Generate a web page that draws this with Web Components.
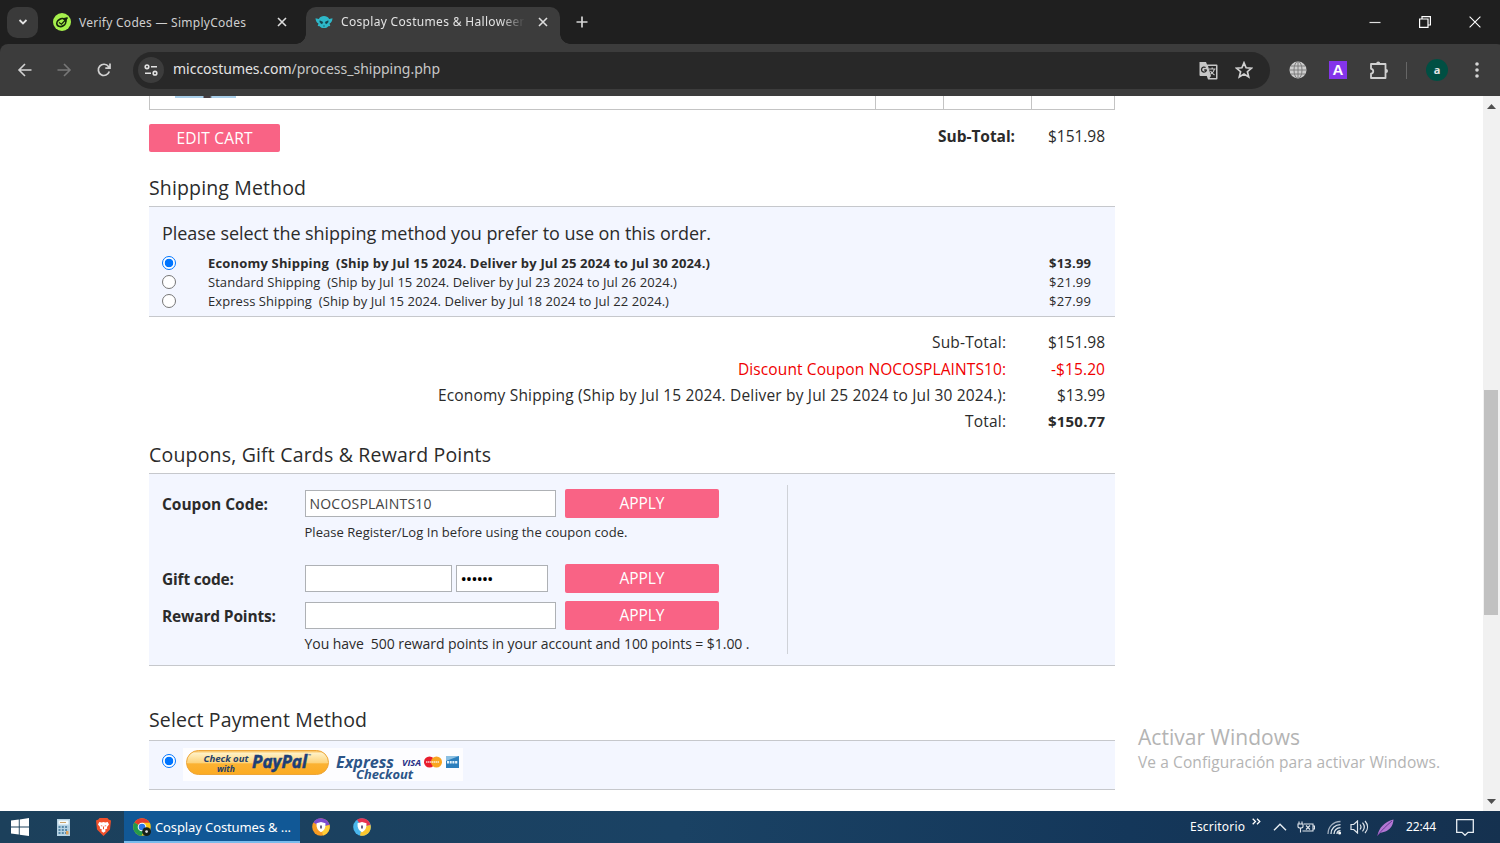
<!DOCTYPE html>
<html lang="en">
<head>
<meta charset="utf-8">
<title>Cosplay Costumes &amp; Halloween</title>
<style>
    html, body { margin: 0; height: 100%; overflow: hidden; }
    body {
        display: grid;
        grid-template-rows: 96px 715px 32px;
        width: 1500px;
        background: #fff;
        color: #2b2b2b;
        font-family: "Open Sans", "Noto Sans", sans-serif;
    }
</style>
</head>
<body>
<browser-chrome></browser-chrome>
<checkout-page></checkout-page>
<task-bar></task-bar>

<script>
const ICONS = {
    chevron: [12, 12, '<path d="M2.5 4l3.5 3.5L9.500 4" fill="none" stroke="#e3e3e3" stroke-width="1.8"/>'],
    simply: [18, 18, '<circle cx="9" cy="9" r="9" fill="#a6f04c"/><ellipse cx="8.300" cy="9.600" rx="4.700" ry="3.700" transform="rotate(-30 8.300 9.600)" fill="none" stroke="#16240a" stroke-width="1.700"/><path d="M6 9.500l2.500 1.700 6-6.500M10 6l3.800-1-1 3.600" fill="none" stroke="#16240a" stroke-width="1.300"/>'],
    mic: [18, 14, '<path d="M.5 3.200l3.300.8C5 1.800 6.800 1 9 1s4 .8 5.200 3l3.300-.8c-.2 2.600-1 4.400-3 5.200l.8 2.600-2 .2C12.400 12.500 11 13 9 13s-3.400-.5-4.300-1.800l-2-.2.800-2.600C1.500 7.600.7 5.800.500 3.200z" fill="#2eb8c9"/><path d="M4.800 5.800l3 1.300-.6 1.500c-1.400.2-2.300-.8-2.400-2.800zm8.400 0l-3 1.300.6 1.500c1.400.2 2.300-.8 2.400-2.800zM8 11h2" fill="#16404a" stroke="#16404a" stroke-width=".6"/>'],
    x: [10, 10, '<path d="M1 1l8 8M9 1L1 9" stroke="#dedede" stroke-width="1.600"/>'],
    plus: [12, 12, '<path d="M6 .5v11M.5 6h11" stroke="#d5d5d5" stroke-width="1.700"/>'],
    minimize: [12, 12, '<path d="M.5 6.500h11" stroke="#e0e0e0" stroke-width="1.200"/>'],
    restore: [12, 12, '<path d="M.6 3h8.400v8.400H.6zM3 3V.6h8.400V9H9" fill="none" stroke="#fff" stroke-width="1.200"/>'],
    close: [12, 12, '<path d="M.6.6l10.800 10.800M11.400.6L.6 11.400" stroke="#fff" stroke-width="1.100"/>'],
    back: [16, 16, '<path d="M14.500 8H2.500M8 2L2 8l6 6" fill="none" stroke="#d2d2d2" stroke-width="1.600"/>'],
    forward: [16, 16, '<path d="M1.500 8h12.500M8 2l6 6-6 6" fill="none" stroke="#777" stroke-width="1.600"/>'],
    reload: [16, 16, '<path d="M13.300 9.500A5.600 5.600 0 1 1 12.500 4.600L14 6M14 1.500V6.200H9.300" fill="none" stroke="#d2d2d2" stroke-width="1.700"/>'],
    tune: [14, 12, '<g fill="none" stroke="#e3e3e3" stroke-width="1.600"><circle cx="3" cy="2.800" r="1.800"/><path d="M7 2.800h6M1 9.200h6"/><circle cx="11" cy="9.200" r="1.800"/></g>'],
    translate: [19, 19, '<path d="M.5 1h6.500l1 2.500h9.500a1 1 0 0 1 1 1v13a1 1 0 0 1-1 1H9L7.800 15H1.500a1 1 0 0 1-1-1z" fill="#c6c6c6"/><path d="M9 5h8v12h-6.500l1.500-2z" fill="#282828"/><path d="M7.700 9H5.200M7.500 9a2.500 2.500 0 1 1-.9-2.400" fill="none" stroke="#282828" stroke-width="1.300"/><path d="M10 8h6.500M13.200 6.500V8M15.500 8c-.5 2.400-2 4-4 5.200M11.500 10c.8 1.600 2.400 3 4 4" fill="none" stroke="#c6c6c6" stroke-width="1.200"/>'],
    star: [18, 18, '<path d="M9 1.800l2.100 5 5.400.4-4.100 3.500 1.300 5.200L9 13.100l-4.700 2.800 1.300-5.200L1.500 7.200l5.400-.4z" fill="none" stroke="#d0d0d0" stroke-width="1.700"/>'],
    globe: [18, 18, '<circle cx="9" cy="9" r="8.500" fill="#ccc"/><g fill="none" stroke="#777" stroke-width=".9"><ellipse cx="9" cy="9" rx="4" ry="8.500"/><path d="M9 .5v17M.5 9h17M1.700 5h14.600M1.700 13h14.600"/></g>'],
    puzzle: [20, 20, '<path d="M2 4h14.500v14H2v-4.300c3-.4 3-4.500 0-4.900z" fill="none" stroke="#d0d0d0" stroke-width="1.800" stroke-linejoin="round"/><path d="M7.200 3.500a2 2 0 0 1 4 0zM17 9a2 2 0 0 1 0 4z" fill="#d0d0d0"/>'],
    dots: [4, 16, '<g fill="#d5d5d5"><circle cx="2" cy="2" r="1.800"/><circle cx="2" cy="8" r="1.800"/><circle cx="2" cy="14" r="1.800"/></g>'],
    windows: [18, 18, '<path d="M0 2.600l7.800-1.100v7H0zM8.700 1.400L18 0v8.500H8.700zM0 9.500h7.800v7L0 15.400zM8.700 9.500H18V18l-9.300-1.300z" fill="#fff"/>'],
    calc: [13, 17, '<rect width="13" height="17" fill="#b7d3e4"/><path d="M1.500 1.500h10v4h-10z" fill="#f3fafd"/><path d="M3 3.500h6" stroke="#c9a26a"/><path d="M1.500 8h10M1.500 11h10M1.500 14h10" stroke="#5989a8" stroke-width="1.800" stroke-dasharray="2 1.300"/><path d="M9 12h2.500v3.500H9z" fill="#e0a45e"/>'],
    brave: [15, 18, '<path d="M3.500 0h8l1.200 1.600L15 2.500 14 11.500 7.500 18 1 11.500 0 2.500l2.300-.9z" fill="#f1502b"/><path d="M3.300 4l2.400.5L7.500 4l1.800.5 2.400-.5 1.300 2.600-2 2.300.2 1.600-2.400 1.300 1 1.200-2.300 1.700-2.300-1.700 1-1.200-2.400-1.300L4 8.900 2 6.600z" fill="#fff"/><path d="M4.500 7l2 .8-.5.900zM10.500 7l-2 .8.500.9zM7 8.500h1v2.700H7z" fill="#f1502b"/>'],
    chrome: [18, 18, '<circle cx="9" cy="9" r="8.800" fill="#fbc518"/><path d="M9 9L1.400 4.600A8.800 8.800 0 0 1 16.700 4.800H9z" fill="#e33b2e"/><path d="M9 9L1.400 4.600A8.800 8.800 0 0 0 8.500 17.800L12 11z" fill="#249a4b"/><circle cx="9" cy="9" r="4.300" fill="#fff"/><circle cx="9" cy="9" r="3.300" fill="#2a75e6"/><circle cx="13.600" cy="13.600" r="4.400" fill="#16201a"/><circle cx="13.600" cy="13.600" r="1.400" fill="#ddd"/>'],
    shieldA: [18, 18, '<circle cx="9" cy="9" r="8.800" fill="#f79a22"/><path d="M9 9L1.500 4.500A8.800 8.800 0 0 1 17.500 7z" fill="#7d4bd0"/><path d="M9 9l8.500-2A8.800 8.800 0 0 1 11 17.500z" fill="#ffce3a"/><path d="M9 4l4.500 1.200c.2 4.600-1.200 7.500-4.500 9-3.300-1.500-4.700-4.400-4.500-9z" fill="#fff"/><path d="M8.200 7.500h1.600v3H8.200z" fill="#473a68"/>'],
    shieldB: [18, 18, '<circle cx="9" cy="9" r="8.800" fill="#49b6ec"/><path d="M9 9L4 1.700A8.800 8.800 0 0 1 17.500 7z" fill="#e8324e"/><path d="M9 9l8.500-2A8.800 8.800 0 0 1 7 17.600z" fill="#fbc62f"/><path d="M9 4l4.500 1.200c.2 4.600-1.200 7.500-4.500 9-3.300-1.500-4.700-4.400-4.500-9z" fill="#fff"/><path d="M8.200 7.500h1.600v3H8.200z" fill="#473a68"/>'],
    more: [9, 7, '<path d="M.7.7l2.800 2.800L.7 6.300M5 .7l2.800 2.800L5 6.300" fill="none" stroke="#fff" stroke-width="1.300"/>'],
    up: [14, 8, '<path d="M1 7.300l6-6 6 6" fill="none" stroke="#e8eef3" stroke-width="1.400"/>'],
    battery: [18, 12, '<g fill="none" stroke="#e2e8ee" stroke-width="1.100"><path d="M7 3h9v7H5.500M16.500 5h1v3h-1M2 .5V3M5 .5V3M1 3h5v2.500c0 1-1 1.500-2.500 1.500S1 6.500 1 5.500zM3.500 7v4.500"/><path d="M9 4.500l4 4M13 4.500l-4 4"/></g>'],
    wifi: [15, 15, '<g fill="none" stroke="#dfe6ec" stroke-width="1.300"><path d="M1 14C1 7 6 1.500 13.500 1.500" opacity=".7"/><path d="M4 14c0-5.500 4-9.300 9.500-9.300M7 14c0-3.800 2.800-6.300 6.500-6.300M10 14c0-2 1.500-3.300 3.500-3.300"/></g><circle cx="12.600" cy="13" r="1.500" fill="#fff"/>'],
    volume: [19, 14, '<g fill="none" stroke="#e2e8ee" stroke-width="1.200"><path d="M1 4.500h2.700L7.500 1v12L3.700 9.500H1zM10 4.500c1.200 1.500 1.200 3.500 0 5M12.500 2.700c2.200 2.600 2.200 6 0 8.600M15 1c3.300 3.600 3.300 8.400 0 12"/></g>'],
    feather: [17, 17, '<path d="M.5 16.500C2 9 7 3 16.500.5c-.2 5-2.500 9-6.500 11.200-2 1-4.500 1.300-7 2.300z" fill="#b277d4"/><path d="M.5 16.500C5 11 9 7 15 2" fill="none" stroke="#6a3a96" stroke-width="1"/>'],
    notify: [18, 17, '<path d="M.7.700h16.600v12.600h-5.300L9 16.300l-3-3H.7z" fill="none" stroke="#e8eef3" stroke-width="1.300"/>'],
    arrowUp: [9, 5, '<path d="M0 5l4.500-5L9 5z" fill="#505050"/>'],
    arrowDown: [9, 5, '<path d="M0 0l4.500 5L9 0z" fill="#505050"/>']
};

class UiIcon extends HTMLElement {
    constructor() {
        super();
        this.attachShadow({ mode: 'open' });
    }

    connectedCallback() {
        const [w, h, body] = ICONS[this.getAttribute('name')];
        this.shadowRoot.innerHTML = `
            <style>
                :host { display: inline-flex; flex: none; align-items: center; justify-content: center; }
                svg { display: block; flex: none; }
            </style>
            <svg width="${w}" height="${h}" viewBox="0 0 ${w} ${h}">${body}</svg>
        `;
        if (this.hasAttribute('cell')) {
            this.style.width = this.getAttribute('cell') + 'px';
        }
    }
}

// Single line of text, tracked so that it fills the given width
class FitText extends HTMLElement {
    constructor() {
        super();
        this.attachShadow({ mode: 'open' });
        this.shadowRoot.innerHTML = `
            <style>
                :host { display: block; flex: none; }
                span { display: block; width: max-content; white-space: pre; }
            </style>
            <span><slot></slot></span>
        `;
    }

    connectedCallback() {
        if (this.hasAttribute('size')) {
            this.style.fontSize = this.getAttribute('size') + 'px';
        }
        const width = parseFloat(this.getAttribute('width'));
        const span = this.shadowRoot.querySelector('span');
        const count = this.textContent.length;
        const natural = span.getBoundingClientRect().width;
        const spacing = (width - natural) / (count - 1);
        span.style.letterSpacing = spacing.toFixed(3) + 'px';
        span.style.marginRight = (-spacing).toFixed(3) + 'px';
    }
}

class BrowserChrome extends HTMLElement {
    constructor() {
        super();
        this.attachShadow({ mode: 'open' });
        this.shadowRoot.innerHTML = `
            <style>
                :host { display: grid; grid-template-rows: 44px 52px; background: #1f1f1f; color: #e3e3e3; font-family: "Noto Sans", sans-serif; }
                .tabs, .tools, .address { display: flex; align-items: center; }
                .tabs { padding-right: 5px; }
                .search { width: 31px; height: 31px; margin-left: 7px; background: #3a3a3a; border-radius: 10px; }
                .tab { display: flex; align-items: center; height: 37px; }
                .first { width: 253px; margin-left: 15px; }
                .first ui-icon[name=simply] { margin-right: 8px; }
                .active { position: relative; width: 254px; margin-top: 7px; background: #3c3c3c; border-radius: 10px 10px 0 0; }
                .active::before, .active::after { content: ""; position: absolute; bottom: 0; width: 10px; height: 10px; }
                .active::before { left: -10px; background: radial-gradient(circle at 0 0, transparent 9.5px, #3c3c3c 10px); }
                .active::after { right: -10px; background: radial-gradient(circle at 100% 0, transparent 9.5px, #3c3c3c 10px); }
                .active > ui-icon, .active > .title { margin-top: -7px; }
                .title { width: 183px; overflow: hidden; line-height: 24px; margin-right: 11px; -webkit-mask-image: linear-gradient(90deg, #000 160px, transparent 184px); }
                .tab.first fit-text { color: #cfcfcf; width: 193px; }
                .spacer { flex: 1; }
                .tools { background: #3c3c3c; border-radius: 8px 8px 0 0; }
                .address { width: 1137px; height: 37px; margin: 0 8px 0 10px; background: #282828; border-radius: 19px; }
                .address fit-text { line-height: 20px; margin-top: -2px; }
                .tune { width: 26px; height: 26px; margin: 0 9px 0 5px; border-radius: 50%; background: #3c3c3c; }
                .path { color: #c7c7c7; }
                .ext { width: 18px; height: 18px; margin: 0 11px; background: #8434ea; color: #fff; font: bold 15px/18px "Liberation Sans", sans-serif; text-align: center; }
                .bar { width: 1px; height: 17px; margin: 0 19px 0 8px; background: #666; }
                .avatar { width: 22px; height: 22px; border-radius: 50%; background: #004f43; font: bold 11px/21px "Noto Sans", sans-serif; text-align: center; }
            </style>
            <div class="tabs">
                <ui-icon class="search" name="chevron"></ui-icon>
                <div class="tab first">
                    <ui-icon name="simply"></ui-icon>
                    <fit-text size="12" width="167">Verify Codes — SimplyCodes</fit-text>
                    <ui-icon name="x" cell="20"></ui-icon>
                </div>
                <div class="tab active">
                    <ui-icon name="mic" cell="35"></ui-icon>
                    <div class="title"><fit-text size="12" width="186">Cosplay Costumes &amp; Halloween</fit-text></div>
                    <ui-icon name="x" cell="16"></ui-icon>
                </div>
                <ui-icon name="plus" cell="44"></ui-icon>
                <span class="spacer"></span>
                <ui-icon name="minimize" cell="51"></ui-icon>
                <ui-icon name="restore" cell="50"></ui-icon>
                <ui-icon name="close" cell="50"></ui-icon>
            </div>
            <div class="tools">
                <ui-icon name="back" cell="50"></ui-icon>
                <ui-icon name="forward" cell="28"></ui-icon>
                <ui-icon name="reload" cell="45" style="margin-left:3px;margin-right:-3px"></ui-icon>
                <div class="address">
                    <ui-icon class="tune" name="tune"></ui-icon>
                    <fit-text size="14" width="267">miccostumes.com<span class="path">/process_shipping.php</span></fit-text>
                    <span class="spacer"></span>
                    <ui-icon name="translate" cell="35"></ui-icon>
                    <ui-icon name="star" cell="36"></ui-icon>
                    <span style="width:8px"></span>
                </div>
                <ui-icon name="globe" cell="40"></ui-icon>
                <div class="ext">A</div>
                <ui-icon name="puzzle" cell="42"></ui-icon>
                <span class="bar" style="margin-left:6px"></span>
                <div class="avatar">a</div>
                <ui-icon name="dots" cell="57"></ui-icon>
            </div>
        `;
    }
}

class ShopButton extends HTMLElement {
    constructor() {
        super();
        this.attachShadow({ mode: 'open' });
        this.shadowRoot.innerHTML = `
            <style>
                :host { display: flex; align-items: center; justify-content: center; box-sizing: border-box; height: 29px; width: 154px; padding-bottom: 1px; background: #f96385; border-radius: 2px; color: #fff; line-height: 22px; }
            </style>
            <slot></slot>
        `;
    }
}

class RadioDot extends HTMLElement {
    constructor() {
        super();
        this.attachShadow({ mode: 'open' });
        this.shadowRoot.innerHTML = `
            <style>
                :host { display: block; flex: none; box-sizing: border-box; width: 14px; height: 14px; border: 1px solid #767676; border-radius: 50%; background: #fff; }
                :host([checked]) { border: 1.500px solid #0075ff; background: radial-gradient(circle, #0075ff 4px, #fff 4.600px); }
            </style>
        `;
    }
}

class TextField extends HTMLElement {
    constructor() {
        super();
        this.attachShadow({ mode: 'open' });
        this.shadowRoot.innerHTML = `
            <style>
                :host { display: flex; align-items: center; box-sizing: border-box; height: 27px; width: 251px; padding: 1px 0 0 4px; border: 1px solid #aeb1b5; background: #fff; color: #444; line-height: 20px; }
            </style>
            <slot></slot>
        `;
    }
}

class SectionPanel extends HTMLElement {
    constructor() {
        super();
        this.attachShadow({ mode: 'open' });
        this.shadowRoot.innerHTML = `
            <style>
                :host { display: block; }
                header { display: flex; align-items: flex-end; box-sizing: border-box; height: var(--head); padding-bottom: var(--lift, 4px); line-height: 28px; }
                .body { box-sizing: border-box; height: var(--body); border: solid #c6c8cc; border-width: 1px 0; background: #f3f6ff; }
            </style>
            <header><slot name="title"></slot></header>
            <div class="body"><slot></slot></div>
        `;
    }
}

class ShippingOption extends HTMLElement {
    constructor() {
        super();
        this.attachShadow({ mode: 'open' });
    }

    connectedCallback() {
        const checked = this.hasAttribute('checked') ? 'checked' : '';
        this.shadowRoot.innerHTML = `
            <style>
                :host { display: flex; align-items: center; height: 18.700px; padding: 0 24px 0 13px; line-height: 18px; }
                :host([checked]) { font-weight: 700; }
                radio-dot { margin-right: 32px; }
                .price { margin-left: auto; }
            </style>
            <radio-dot ${checked}></radio-dot>
            <slot></slot>
            <span class="price"><fit-text size="13" width="42">${this.getAttribute('price')}</fit-text></span>
        `;
    }
}

class TotalRow extends HTMLElement {
    constructor() {
        super();
        this.attachShadow({ mode: 'open' });
        this.shadowRoot.innerHTML = `
            <style>
                :host { display: grid; grid-template-columns: 857px 99px; justify-items: end; align-items: center; height: 26.400px; line-height: 24px; }
            </style>
            <slot></slot><slot name="value"></slot>
        `;
    }
}

class PaypalBadge extends HTMLElement {
    constructor() {
        super();
        this.attachShadow({ mode: 'open' });
        this.shadowRoot.innerHTML = `
            <style>
                :host { display: block; flex: none; width: 280px; height: 33px; background: #fdfdff; }
                svg { display: block; }
                text { font-family: "Open Sans", "Noto Sans", sans-serif; font-style: italic; font-weight: 700; }
            </style>
            <svg width="280" height="33" viewBox="0 0 280 33">
                <defs>
                    <linearGradient id="gold" x2="0" y2="1">
                        <stop offset="0" stop-color="#f7b544"/>
                        <stop offset=".12" stop-color="#fff0c4"/>
                        <stop offset=".5" stop-color="#fdd47c"/>
                        <stop offset=".56" stop-color="#fbb232"/>
                        <stop offset="1" stop-color="#fcab22"/>
                    </linearGradient>
                </defs>
                <rect x="3.500" y="2.500" width="142" height="24" rx="12" fill="url(#gold)" stroke="#eda63a"/>
                <g fill="#24406a">
                    <text x="20.500" y="14" font-size="9.500" textLength="45" lengthAdjust="spacingAndGlyphs">Check out</text>
                    <text x="34" y="23.500" font-size="9.500" textLength="18" lengthAdjust="spacingAndGlyphs">with</text>
                </g>
                <text x="69" y="20" font-size="17.500" textLength="55" lengthAdjust="spacingAndGlyphs" fill="#1c3f78" stroke="#1c3f78" stroke-width=".5">PayPal</text>
                <text x="125" y="9" font-size="4" fill="#1c3f78">™</text>
                <g fill="#2c5588">
                    <text x="153" y="20" font-size="15.500" textLength="58" lengthAdjust="spacingAndGlyphs">Express</text>
                    <text x="173" y="30.500" font-size="12" textLength="57" lengthAdjust="spacingAndGlyphs">Checkout</text>
                </g>
                <text x="219" y="17.500" font-size="9.500" textLength="19" lengthAdjust="spacingAndGlyphs" fill="#272f85">VISA</text>
                <circle cx="246.500" cy="14" r="5.500" fill="#e81d2e"/>
                <circle cx="253.500" cy="14" r="5.500" fill="#f9a51f"/>
                <path d="M243 14h13" stroke="#fff" stroke-width="1.600" stroke-dasharray="1.500 .5" opacity=".8"/>
                <rect x="263" y="8" width="13" height="12" fill="#2c7fbd"/>
                <path d="M263 8h13L263 13z" fill="#8cc0e2"/>
                <path d="M264 14.300h11" stroke="#e3f2fb" stroke-width="2.500" stroke-dasharray="2 .7"/>
            </svg>
        `;
    }
}

class PageScrollbar extends HTMLElement {
    constructor() {
        super();
        this.attachShadow({ mode: 'open' });
        this.shadowRoot.innerHTML = `
            <style>
                :host { display: grid; grid-template-rows: 20px 1fr 20px; justify-items: center; background: #f1f1f1; }
                .thumb { width: 14px; height: 225px; margin: 274px 2px 0 0; background: #c1c1c1; }
            </style>
            <ui-icon name="arrowUp"></ui-icon>
            <div class="thumb"></div>
            <ui-icon name="arrowDown"></ui-icon>
        `;
    }
}

class CheckoutPage extends HTMLElement {
    constructor() {
        super();
        this.attachShadow({ mode: 'open' });
        this.shadowRoot.innerHTML = `
            <style>
                :host { display: grid; grid-template-columns: 1483px 17px; position: relative; overflow: hidden; }
                main { width: 966px; margin-left: 149px; }
                .items { display: grid; grid-template-columns: 725px 67px 87px 1fr; gap: 1px; box-sizing: border-box; height: 14px; padding: 0 1px 1px; background: #c4c4c4; }
                .items div { background: #fff; }
                .items .thumb { width: 61px; height: 2px; margin-left: 25px; background: linear-gradient(90deg, #a9cfea 28px, #453c40 29px 35px, #a9cfea 37px); }
                .cart { display: flex; align-items: flex-start; margin-top: 14px; height: 28px; padding-right: 10px; line-height: 24px; }
                .cart shop-button { width: 131px; height: 28px; margin-right: auto; }
                .cart b { margin-right: 33px; }
                .lead { padding: 14px 0 9px 13px; line-height: 24px; display: flex; }
                .totals { height: 118.600px; padding-top: 12px; box-sizing: border-box; }
                .red { color: #f00000; }
                .form { display: grid; grid-template-columns: 142.500px 260.500px 154px; grid-template-rows: 29px 46px 29px 8px 29px 28px; align-items: center; box-sizing: border-box; width: 639px; height: 169px; margin-top: 11px; padding: 4px 0 0 13px; border-right: 1px solid #cfd2d8; }
                .form b { line-height: 22px; padding-top: 1px; }
                .pair { display: flex; gap: 4px; }
                .hint { grid-column: 2 / 4; align-self: start; line-height: 20px; display: flex; padding-top: 4px; }
                .gap { grid-column: 1 / 4; }
                .pay { display: flex; align-items: center; gap: 7px; padding: 7px 13px; }
                .pay radio-dot { margin-top: -7px; }
                .activate { position: absolute; left: 1138px; top: 627px; color: #b4b4b4; }
                .activate fit-text { line-height: 28px; }
                .activate fit-text + fit-text { line-height: 22px; }
            </style>
            <main>
                <div class="items"><div><div class="thumb"></div></div><div></div><div></div><div></div></div>
                <div class="cart">
                    <shop-button><fit-text size="15.500" width="76">EDIT CART</fit-text></shop-button>
                    <b><fit-text size="15.500" width="77">Sub-Total:</fit-text></b>
                    <fit-text size="15.500" width="57">$151.98</fit-text>
                </div>
                <section-panel style="--head:54px;--body:111px">
                    <fit-text slot="title" size="19.500" width="157">Shipping Method</fit-text>
                    <div class="lead"><fit-text size="18" width="549">Please select the shipping method you prefer to use on this order.</fit-text></div>
                    <shipping-option checked price="$13.99"><fit-text size="13" width="502">Economy Shipping  (Ship by Jul 15 2024. Deliver by Jul 25 2024 to Jul 30 2024.)</fit-text></shipping-option>
                    <shipping-option price="$21.99"><fit-text size="13" width="469">Standard Shipping  (Ship by Jul 15 2024. Deliver by Jul 23 2024 to Jul 26 2024.)</fit-text></shipping-option>
                    <shipping-option price="$27.99"><fit-text size="13" width="461">Express Shipping  (Ship by Jul 15 2024. Deliver by Jul 18 2024 to Jul 22 2024.)</fit-text></shipping-option>
                </section-panel>
                <div class="totals">
                    <total-row><fit-text size="15.500" width="74">Sub-Total:</fit-text><fit-text slot="value" size="15.500" width="57">$151.98</fit-text></total-row>
                    <total-row class="red"><fit-text size="15.500" width="268">Discount Coupon NOCOSPLAINTS10:</fit-text><fit-text slot="value" size="15.500" width="54">-$15.20</fit-text></total-row>
                    <total-row><fit-text size="15.500" width="568">Economy Shipping (Ship by Jul 15 2024. Deliver by Jul 25 2024 to Jul 30 2024.):</fit-text><fit-text slot="value" size="15.500" width="48">$13.99</fit-text></total-row>
                    <total-row><fit-text size="15.500" width="41">Total:</fit-text><b slot="value"><fit-text size="15" width="57">$150.77</fit-text></b></total-row>
                </div>
                <section-panel style="--head:37.400px;--body:193px">
                    <fit-text slot="title" size="19.500" width="342">Coupons, Gift Cards &amp; Reward Points</fit-text>
                    <div style="display:flow-root"><div class="form">
                        <b><fit-text size="15.500" width="106">Coupon Code:</fit-text></b>
                        <text-field><fit-text size="14" width="122">NOCOSPLAINTS10</fit-text></text-field>
                        <shop-button><fit-text size="15.500" width="45">APPLY</fit-text></shop-button>
                        <span></span>
                        <div class="hint"><fit-text size="13" width="323">Please Register/Log In before using the coupon code.</fit-text></div>
                        <b><fit-text size="15.500" width="72">Gift code:</fit-text></b>
                        <div class="pair">
                            <text-field style="width:147px"></text-field>
                            <text-field style="width:92px;color:#000"><fit-text size="17" width="33">••••••</fit-text></text-field>
                        </div>
                        <shop-button><fit-text size="15.500" width="45">APPLY</fit-text></shop-button>
                        <span class="gap"></span>
                        <b><fit-text size="15.500" width="114">Reward Points:</fit-text></b>
                        <text-field></text-field>
                        <shop-button><fit-text size="15.500" width="45">APPLY</fit-text></shop-button>
                        <span></span>
                        <div class="hint"><fit-text size="14" width="445">You have  500 reward points in your account and 100 points = $1.00 .</fit-text></div>
                    </div></div>
                </section-panel>
                <section-panel style="--head:74px;--body:50px;--lift:6px">
                    <fit-text slot="title" size="19.500" width="218">Select Payment Method</fit-text>
                    <div class="pay"><radio-dot checked></radio-dot><paypal-badge></paypal-badge></div>
                </section-panel>
            </main>
            <page-scrollbar></page-scrollbar>
            <div class="activate">
                <fit-text size="21" width="162">Activar Windows</fit-text>
                <fit-text size="15.500" width="302">Ve a Configuración para activar Windows.</fit-text>
            </div>
        `;
    }
}

class TaskBar extends HTMLElement {
    constructor() {
        super();
        this.attachShadow({ mode: 'open' });
        this.shadowRoot.innerHTML = `
            <style>
                :host { display: flex; align-items: center; background: linear-gradient(90deg, #1c405b, #1a4264 45%, #14375a 75%, #15314f); color: #fff; line-height: 20px; font-family: "Noto Sans", sans-serif; }
                .window { display: flex; align-items: center; gap: 4px; box-sizing: border-box; width: 176px; height: 32px; padding: 2px 0 0 9px; background: #115896; border-bottom: 2px solid #79bcec; }
                .spacer { flex: 1; }
                .more { margin: -12px 0 0 7px; }
                .desk { width: 1px; height: 32px; background: #6d8298; margin-right: 4px; }
            </style>
            <ui-icon name="windows" cell="40"></ui-icon>
            <ui-icon name="calc" cell="46"></ui-icon>
            <ui-icon name="brave" cell="35"></ui-icon>
            <span style="width:3px"></span>
            <div class="window"><ui-icon name="chrome"></ui-icon><fit-text size="13" width="136">Cosplay Costumes &amp; ...</fit-text></div>
            <ui-icon name="shieldA" cell="41"></ui-icon>
            <ui-icon name="shieldB" cell="41"></ui-icon>
            <span class="spacer"></span>
            <fit-text size="12" width="55">Escritorio</fit-text>
            <ui-icon class="more" name="more"></ui-icon>
            <ui-icon name="up" cell="37"></ui-icon>
            <ui-icon name="battery" cell="16"></ui-icon>
            <ui-icon name="wifi" cell="40"></ui-icon>
            <ui-icon name="volume" cell="10"></ui-icon>
            <ui-icon name="feather" cell="42"></ui-icon>
            <fit-text size="12" width="30">22:44</fit-text>
            <ui-icon name="notify" cell="57"></ui-icon>
            <span style="width:7px"></span>
            <span class="desk"></span>
        `;
    }
}

customElements.define('ui-icon', UiIcon);
customElements.define('browser-chrome', BrowserChrome);
customElements.define('shop-button', ShopButton);
customElements.define('radio-dot', RadioDot);
customElements.define('text-field', TextField);
customElements.define('section-panel', SectionPanel);
customElements.define('shipping-option', ShippingOption);
customElements.define('total-row', TotalRow);
customElements.define('paypal-badge', PaypalBadge);
customElements.define('page-scrollbar', PageScrollbar);
customElements.define('checkout-page', CheckoutPage);
customElements.define('task-bar', TaskBar);
// Measures its text, so everything around it has to be in place first
customElements.define('fit-text', FitText);
</script>
</body>
</html>
